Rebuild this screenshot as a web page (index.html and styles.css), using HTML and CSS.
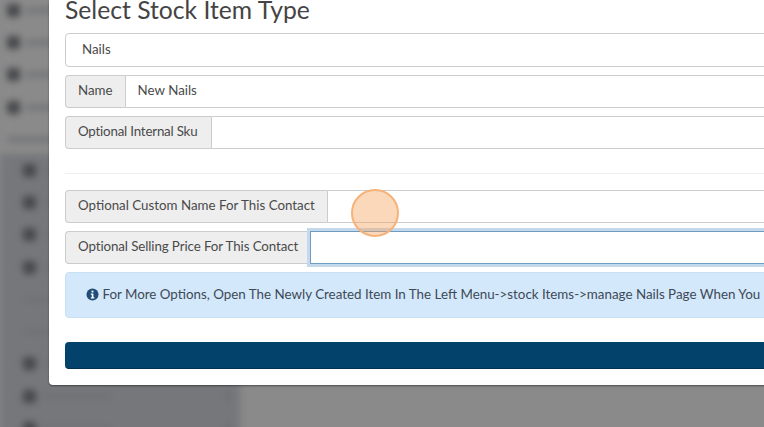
FILE: index.html
```html
<!DOCTYPE html>
<html lang="en">
<head>
    <meta charset="UTF-8">
    <title>Select Stock Item Type</title>
    <meta name="viewport" content="width=device-width, initial-scale=1">
    <link rel="stylesheet" href="styles.css">
</head>
<body>
    <!-- page behind the dialog, out of focus -->
    <aside class="sidebar">
        <div class="menu-top">
            <div class="menu-item"><span class="dot"></span><span class="bar"></span></div>
            <div class="menu-item"><span class="dot"></span><span class="bar"></span></div>
            <div class="menu-item"><span class="dot"></span><span class="bar"></span></div>
            <div class="menu-item"><span class="dot"></span><span class="bar"></span></div>
            <div class="menu-item"><span class="bar"></span></div>
        </div>
        <div class="menu-sub">
            <div class="menu-item"><span class="dot"></span><span class="bar"></span></div>
            <div class="menu-item"><span class="dot"></span><span class="bar"></span></div>
            <div class="menu-item"><span class="dot"></span><span class="bar"></span></div>
            <div class="menu-item"><span class="dot"></span><span class="bar"></span></div>
            <div class="menu-item"><span class="bar"></span></div>
            <div class="menu-item"><span class="bar"></span></div>
            <div class="menu-item"><span class="dot"></span><span class="bar"></span></div>
            <div class="menu-item"><span class="dot"></span><span class="bar"></span><span class="chevron"></span></div>
            <div class="menu-item"><span class="dot"></span><span class="bar"></span><span class="chevron"></span></div>
        </div>
    </aside>

    <div class="modal">
        <h4 class="modal-title">Select Stock Item Type</h4>

        <div class="select-box">Nails</div>

        <div class="input-group">
            <span class="addon">Name</span>
            <div class="field">New Nails</div>
        </div>
        <div class="input-group">
            <span class="addon addon-sku">Optional Internal Sku</span>
            <div class="field"></div>
        </div>

        <hr class="divider">

        <div class="input-group">
            <span class="addon">Optional Custom Name For This Contact</span>
            <div class="field"></div>
        </div>
        <div class="input-group">
            <span class="addon addon-price">Optional Selling Price For This Contact</span>
            <div class="field field-focus"></div>
        </div>

        <div class="alert">
            <svg class="info-icon" viewBox="0 0 14 14" width="13" height="13">
                <circle cx="7" cy="7" r="6.5" fill="#1f4e79"/>
                <rect x="6" y="2.8" width="2" height="2" fill="#fff"/>
                <path d="M5.2 6h2.8v4h1v1.2H5.200V10h1V7.200h-1z" fill="#fff"/>
            </svg>
            For More Options, Open The Newly Created Item In The Left Menu-&gt;stock Items-&gt;manage Nails Page When You Have Saved
        </div>

        <div class="save-btn"></div>
    </div>

    <!-- click marker from the screen recording -->
    <div class="click-marker"></div>
</body>
</html>
```

FILE: styles.css
```css
html, body {
    margin: 0;
    padding: 0;
    height: 100%;
    overflow: hidden;
}
body {
    position: relative;
    background: #8a8a8a;
    font-family: Lato, 'Open Sans', sans-serif;
    color: #4a4a4a;
}

/* blurred page behind the dialog */
.sidebar {
    width: 240px;
    height: 100%;
    filter: blur(3.5px);
    margin-top: -6px;
}
.menu-top {
    height: 166px;
    padding-left: 7px;
    background: #8a8a8a;
    box-sizing: border-box;
}
.menu-sub {
    height: 300px;
    padding-left: 23px;
    background: #76777b;
    box-sizing: border-box;
}
.menu-sub .menu-item:first-child {
    margin-top: -6px;
}
.menu-item {
    height: 32.3px;
    display: flex;
    align-items: center;
    gap: 6px;
}
.dot {
    width: 13px;
    height: 13px;
    border-radius: 3px;
    background: #47484c;
}
.bar {
    width: 70px;
    height: 5px;
    background: #707175;
}
.chevron {
    width: 5px;
    height: 9px;
    margin-left: auto;
    margin-right: 9px;
    background: #6c6d71;
}

/* dialog */
.modal {
    position: absolute;
    left: 49px;
    right: -60px;
    bottom: 42px;
    padding: 0 16px 16px;
    background: #fff;
    border-radius: 0 0 4px 4px;
    box-shadow: 0 1px 2px rgba(0,0,0,0.45);
}
.modal-title {
    margin: 0 0 8px;
    height: 25px;
    line-height: 20px;
    font-size: 24.7px;
    font-weight: 400;
    color: #444;
}
.select-box {
    height: 34px;
    line-height: 30px;
    box-sizing: border-box;
    padding-left: 16px;
    margin-bottom: 8px;
    border: 1px solid #ccc;
    border-radius: 4px;
    font-size: 13.33px;
}
.input-group {
    display: flex;
    height: 33px;
    margin-bottom: 8px;
    font-size: 13.33px;
}
.addon {
    padding: 0 12px;
    line-height: 29px;
    white-space: nowrap;
    background: #eee;
    border: 1px solid #ccc;
    border-right: 0;
    border-radius: 4px 0 0 4px;
}
.addon-sku {
    letter-spacing: -0.2px;
    padding-right: 14px;
}
.addon-price {
    letter-spacing: -0.1px;
}
.field {
    flex: 1;
    padding-left: 12px;
    line-height: 29px;
    border: 1px solid #ccc;
    border-radius: 0 4px 4px 0;
}
.field-focus {
    position: relative;
    border-color: #6f9cc0;
    box-shadow: 0 0 0 3px #c5d9ec;
    border-radius: 0;
}
.divider {
    margin: 24px 0 16px;
    border: 0;
    border-top: 1px solid #eee;
}
.alert {
    height: 46px;
    line-height: 42px;
    box-sizing: border-box;
    padding-left: 20px;
    margin-bottom: 24px;
    font-size: 13.37px;
    white-space: nowrap;
    overflow: hidden;
    background: #d4e8fb;
    border: 1px solid #c9dff2;
    border-radius: 4px;
    color: #3d4a57;
}
.info-icon {
    vertical-align: -2px;
}
.save-btn {
    height: 27px;
    background: #03426a;
    border-bottom: 1px solid #02304e;
    box-sizing: border-box;
    border-radius: 4px;
}

.click-marker {
    position: absolute;
    left: 351px;
    top: 189px;
    width: 48px;
    height: 48px;
    box-sizing: border-box;
    border-radius: 50%;
    background: rgba(246, 163, 90, 0.42);
    border: 2px solid #f5b27a;
}
```
